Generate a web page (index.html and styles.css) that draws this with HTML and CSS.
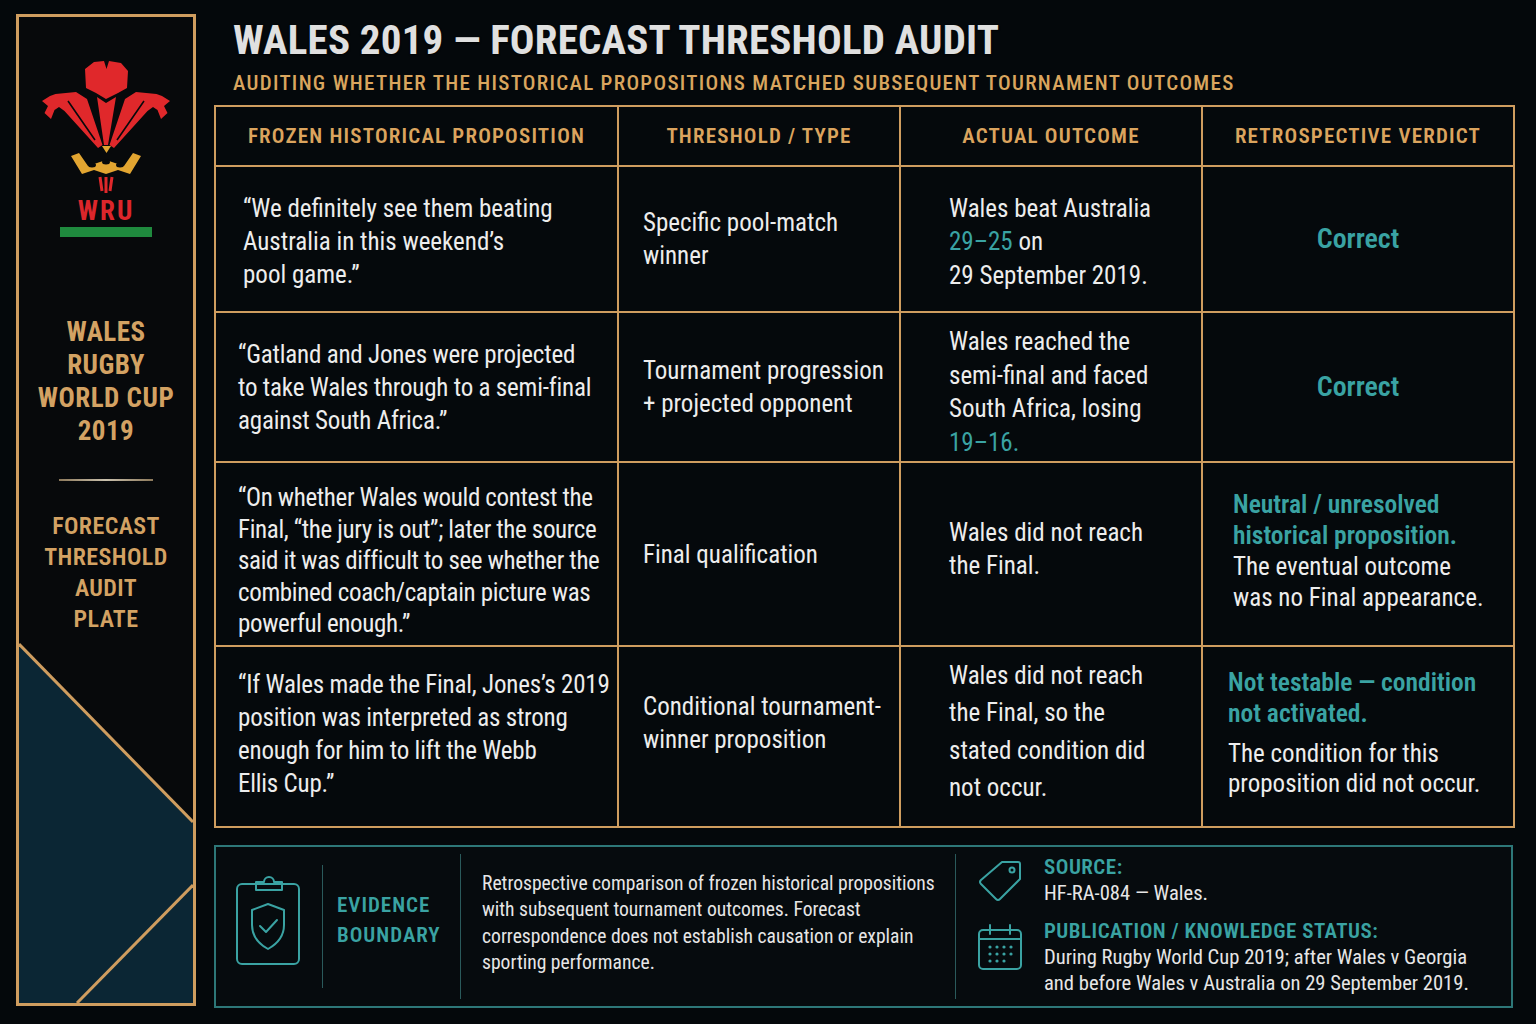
FILE: index.html
```html
<!DOCTYPE html>
<html lang="en">
<head>
<meta charset="utf-8">
<title>Wales 2019 — Forecast Threshold Audit</title>
<link rel="stylesheet" href="styles.css">
</head>
<body>
<aside class="plate">
  <svg class="crest" viewBox="0 0 132 140" width="132" height="140" aria-hidden="true">
    <g fill="#e0282b">
      <path d="M45,11 L54,4 L64,3 L66.5,11 L69,3 L81,5 L88,13 L87,30 L78,35 L66,41 L56,35 L46,30 Z"/>
      <path d="M57,39 L66,45 L76,39 L68,87 L64,87 Z"/>
      <path d="M2,43 L10,38 L15.5,36 L36,34 L47,41 L62.5,87 L58,90 L24.5,53 L19,49 L14.5,52 L11,61 L4.5,55 L8,48 Z"/>
      <path d="M130,43 L122,38 L116.5,36 L96,34 L85,41 L69.5,87 L74,90 L107.5,53 L113,49 L117.5,52 L121,61 L127.5,55 L124,48 Z"/>
    </g>
    <path d="M28,43 L55,82 M104,43 L77,82" stroke="#07090b" stroke-width="1.6" fill="none"/>
    <g fill="#e2a531">
      <path d="M62,88 L71,88 L66.5,95 Z"/>
      <path d="M31,98 L39,95 L48,108 L66,102 L84,108 L93,95 L101,98 L90,116 L78,112 L66,116 L54,112 L42,116 Z"/>
    </g>
    <g fill="#07090b">
      <ellipse cx="52" cy="107" rx="4" ry="2.5"/>
      <ellipse cx="66" cy="104" rx="4" ry="2.5"/>
      <ellipse cx="80" cy="107" rx="4" ry="2.5"/>
    </g>
    <path d="M60,119 L62,133 M66,119 L66,135 M72,119 L70,133" stroke="#e0282b" stroke-width="3" fill="none"/>
  </svg>
  <div class="wru">WRU</div>
  <div class="green-bar"></div>
  <div class="plate-title">WALES<br>RUGBY<br>WORLD CUP<br>2019</div>
  <div class="plate-rule"></div>
  <div class="plate-sub">FORECAST<br>THRESHOLD<br>AUDIT<br>PLATE</div>
  <svg class="plate-foot" viewBox="0 0 174 361" preserveAspectRatio="none" aria-hidden="true">
    <polygon points="0,2 174,180 174,361 0,361" fill="#0b2634"/>
    <line x1="0" y1="2" x2="174" y2="180" stroke="#cf9d5f" stroke-width="3"/>
    <line x1="174" y1="243" x2="58" y2="361" stroke="#cf9d5f" stroke-width="3"/>
  </svg>
</aside>

<main class="main">
  <header class="head">
    <h1 class="title">WALES 2019 — FORECAST THRESHOLD AUDIT</h1>
    <p class="subtitle">AUDITING WHETHER THE HISTORICAL PROPOSITIONS MATCHED SUBSEQUENT TOURNAMENT OUTCOMES</p>
  </header>

  <table class="audit">
    <colgroup>
      <col class="c1"><col class="c2"><col class="c3"><col class="c4">
    </colgroup>
    <thead>
      <tr class="r0">
        <th>FROZEN HISTORICAL PROPOSITION</th>
        <th>THRESHOLD / TYPE</th>
        <th>ACTUAL OUTCOME</th>
        <th>RETROSPECTIVE VERDICT</th>
      </tr>
    </thead>
    <tbody>
      <tr class="r1">
        <td class="quote down-2">“We definitely see them beating<br>Australia in this weekend’s<br>pool game.”</td>
        <td class="type">Specific pool-match<br>winner</td>
        <td class="outcome down-3">Wales beat Australia<br><span class="teal">29–25</span> on<br>29 September 2019.</td>
        <td class="verdict"><span class="correct">Correct</span></td>
      </tr>
      <tr class="r2">
        <td class="quote q-tight">“Gatland and Jones were projected<br>to take Wales through to a semi-final<br>against South Africa.”</td>
        <td class="type">Tournament progression<br>+ projected opponent</td>
        <td class="outcome down-5">Wales reached the<br>semi-final and faced<br>South Africa, losing<br><span class="teal">19–16.</span></td>
        <td class="verdict"><span class="correct">Correct</span></td>
      </tr>
      <tr class="r3">
        <td class="quote q-tight q-dense down-7">“On whether Wales would contest the<br>Final, “the jury is out”; later the source<br>said it was difficult to see whether the<br>combined coach/captain picture was<br>powerful enough.”</td>
        <td class="type">Final qualification</td>
        <td class="outcome up-5">Wales did not reach<br>the Final.</td>
        <td class="verdict-text up-3"><div class="v-head">Neutral / unresolved<br>historical proposition.</div><div class="v-body">The eventual outcome<br>was no Final appearance.</div></td>
      </tr>
      <tr class="r4">
        <td class="quote q-tight up-3">“If Wales made the Final, Jones’s 2019<br>position was interpreted as strong<br>enough for him to lift the Webb<br>Ellis Cup.”</td>
        <td class="type up-14">Conditional tournament-<br>winner proposition</td>
        <td class="outcome o-loose up-5">Wales did not reach<br>the Final, so the<br>stated condition did<br>not occur.</td>
        <td class="verdict-text vt-narrow up-4"><div class="v-head">Not testable — condition<br>not activated.</div><div class="v-body v-gap">The condition for this<br>proposition did not occur.</div></td>
      </tr>
    </tbody>
  </table>

  <section class="evidence">
    <div class="ev-icon">
      <svg viewBox="0 0 64 92" width="64" height="92" aria-hidden="true" fill="none" stroke="#3aa3a3" stroke-width="2" stroke-linejoin="round" stroke-linecap="round">
        <rect x="1" y="10" width="62" height="80" rx="5"/>
        <path d="M20,16 V8 H28 A5,5 0 0 1 38,8 H46 V16 Z"/>
        <path d="M32,30 L48,36 V51 C48,62 41,70 32,75 C23,70 16,62 16,51 V36 Z"/>
        <path d="M24,52 L30,58 L41,46"/>
      </svg>
    </div>
    <div class="vline short"></div>
    <div class="ev-label">EVIDENCE<br>BOUNDARY</div>
    <div class="vline"></div>
    <p class="ev-text">Retrospective comparison of frozen historical propositions<br>with subsequent tournament outcomes. Forecast<br>correspondence does not establish causation or explain<br>sporting performance.</p>
    <div class="vline"></div>
    <div class="meta">
      <svg class="meta-icon" viewBox="0 0 44 42" width="44" height="42" aria-hidden="true" fill="none" stroke="#3aa3a3" stroke-width="2" stroke-linejoin="round">
        <path d="M24,2 H40 Q42,2 42,4 V19 L22,39 Q20,41 18,39 L3,24 Q1,22 3,20 Z"/>
        <circle cx="34" cy="10" r="2.5"/>
      </svg>
      <div class="meta-block">
        <div class="meta-label">SOURCE:</div>
        <div class="meta-value">HF-RA-084 — Wales.</div>
      </div>
      <svg class="meta-icon cal" viewBox="0 0 44 46" width="44" height="46" aria-hidden="true" fill="none" stroke="#3aa3a3" stroke-width="2" stroke-linejoin="round" stroke-linecap="round">
        <rect x="1" y="6" width="42" height="39" rx="4"/>
        <path d="M1,15 H43 M12,1 V10 M32,1 V10"/>
        <g fill="#3aa3a3" stroke="none">
          <circle cx="12" cy="23" r="1.6"/><circle cx="19" cy="23" r="1.6"/><circle cx="26" cy="23" r="1.6"/><circle cx="33" cy="23" r="1.6"/>
          <circle cx="12" cy="30" r="1.6"/><circle cx="19" cy="30" r="1.6"/><circle cx="26" cy="30" r="1.6"/><circle cx="33" cy="30" r="1.6"/>
          <circle cx="12" cy="37" r="1.6"/><circle cx="19" cy="37" r="1.6"/><circle cx="26" cy="37" r="1.6"/>
        </g>
      </svg>
      <div class="meta-block">
        <div class="meta-label">PUBLICATION / KNOWLEDGE STATUS:</div>
        <div class="meta-value">During Rugby World Cup 2019; after Wales v Georgia<br>and before Wales v Australia on 29 September 2019.</div>
      </div>
    </div>
  </section>
</main>
</body>
</html>
```

FILE: styles.css
```css
* { box-sizing: border-box; }

html, body {
  margin: 0;
  height: 100%;
}

body {
  width: 1536px;
  height: 1024px;
  overflow: hidden;
  background: #04080b;
  display: flex;
  align-items: flex-start;
  gap: 18px;
  padding: 14px 0 0 16px;
  font-family: Roboto, "Liberation Sans", sans-serif;
  font-stretch: 75%;
  color: #ececec;
}

/* ---------- Side plate ---------- */
.plate {
  width: 180px;
  height: 992px;
  flex: none;
  border: 3px solid #cf9d5f;
  background: #07090b;
  display: flex;
  flex-direction: column;
  align-items: center;
  padding-top: 41px;
  overflow: hidden;
}

.crest { display: block; flex: none; }

.wru {
  color: #dc262b;
  font-weight: bold;
  font-size: 27px;
  line-height: 26px;
  letter-spacing: 2px;
}

.green-bar {
  width: 92px;
  height: 10px;
  margin-top: 3px;
  background: #1f8a3e;
}

.plate-title {
  margin-top: 79px;
  color: #d3a263;
  font-weight: bold;
  font-size: 27px;
  line-height: 33px;
  letter-spacing: 0.5px;
  text-align: center;
}

.plate-rule {
  width: 94px;
  height: 2px;
  margin-top: 31px;
  background: linear-gradient(90deg, #8d7a5c, #c9c0ad 50%, #8d7a5c);
}

.plate-sub {
  margin-top: 30px;
  color: #d3a263;
  font-weight: 600;
  font-size: 24px;
  line-height: 31px;
  letter-spacing: 0.4px;
  text-align: center;
}

.plate-foot {
  display: block;
  margin-top: auto;
  width: 174px;
  height: 361px;
  flex: none;
}

/* ---------- Main ---------- */
.main {
  width: 1299px;
  display: flex;
  flex-direction: column;
}

.head {
  margin-top: 2px;
  padding-left: 19px;
}

.title {
  margin: 0;
  font-size: 41px;
  line-height: 48px;
  font-weight: bold;
  letter-spacing: 0.2px;
  color: #e0e0e0;
  text-shadow: 0 1px 2px rgba(0,0,0,0.8);
}

.subtitle {
  margin: 7px 0 0;
  font-size: 21px;
  line-height: 24px;
  letter-spacing: 1.3px;
  color: #d9a55e;
  font-weight: 500;
  white-space: nowrap;
}

/* ---------- Table ---------- */
.audit {
  margin-top: 10px;
  width: 1299px;
  table-layout: fixed;
  border-collapse: collapse;
  border: 2px solid #cf9d5f;
  background: #05090c;
}

.c1 { width: 403px; }
.c2 { width: 282px; }
.c3 { width: 302px; }
.c4 { width: 312px; }

.audit th,
.audit td {
  border: 2px solid #cf9d5f;
  vertical-align: middle;
}

.audit th {
  color: #dba45e;
  font-size: 21px;
  font-weight: 600;
  letter-spacing: 1.2px;
  text-align: center;
  padding: 0;
}

.r0 { height: 60px; }
.r1 { height: 146px; }
.r2 { height: 150px; }
.r3 { height: 184px; }
.r4 { height: 181px; }

.audit td {
  font-size: 25px;
  line-height: 33px;
  color: #ededed;
  padding: 0 4px 0 24px;
  white-space: nowrap;
}

.audit td.quote { padding-left: 27px; }
.audit td.q-tight { padding-left: 22px; letter-spacing: -0.2px; }
.audit td.q-dense { line-height: 31.5px; letter-spacing: -0.35px; }

.audit td.outcome { padding-left: 48px; line-height: 33.5px; }
.audit td.o-loose { line-height: 37.5px; }

/* fine vertical nudges of cell content */
.audit td.down-2 { padding-top: 4px; }
.audit td.down-3 { padding-top: 6px; }
.audit td.down-5 { padding-top: 10px; }
.audit td.down-7 { padding-top: 14px; }
.audit td.up-3 { padding-bottom: 6px; }
.audit td.up-4 { padding-bottom: 8px; }
.audit td.up-5 { padding-bottom: 10px; }
.audit td.up-14 { padding-bottom: 28px; }

.teal { color: #3aa3a3; }

.audit td.verdict { text-align: center; padding: 0; }

.correct {
  color: #3aa3a3;
  font-size: 28px;
  font-weight: 600;
}

.audit td.verdict-text { padding-left: 30px; line-height: 31px; }
.audit td.vt-narrow { padding-left: 25px; }

.v-head {
  color: #3aa3a3;
  font-weight: 600;
  font-size: 25.5px;
}

.v-gap { margin-top: 10px; line-height: 30px; }

/* ---------- Evidence panel ---------- */
.evidence {
  margin-top: 17px;
  height: 163px;
  border: 2px solid #2d7778;
  background: #060b0e;
  display: flex;
  align-items: center;
}

.ev-icon {
  margin: 0 22px 0 20px;
  display: flex;
  padding-bottom: 14px;
}

.vline {
  width: 1px;
  height: 145px;
  background: #2a5a5b;
  flex: none;
}

.vline.short { height: 123px; }

.ev-label {
  width: 137px;
  padding-left: 14px;
  color: #3aa3a3;
  font-size: 21px;
  font-weight: 600;
  letter-spacing: 1px;
  line-height: 30px;
  padding-bottom: 14px;
}

.ev-text {
  margin: 0;
  width: 494px;
  padding-left: 21px;
  padding-bottom: 6px;
  font-size: 19.6px;
  line-height: 26.3px;
  color: #e6e6e6;
  white-space: nowrap;
}

.meta {
  padding-left: 22px;
  display: grid;
  grid-template-columns: 66px auto;
  row-gap: 12px;
  align-items: start;
  padding-bottom: 4px;
}

.meta-icon { display: block; margin-top: 6px; }
.meta-icon.cal { margin-top: 6px; }

.meta-label {
  color: #3aa3a3;
  font-size: 21px;
  font-weight: 600;
  letter-spacing: 0.5px;
  line-height: 26px;
}

.meta-value {
  font-size: 20.6px;
  line-height: 26px;
  color: #e6e6e6;
  white-space: nowrap;
}
```
